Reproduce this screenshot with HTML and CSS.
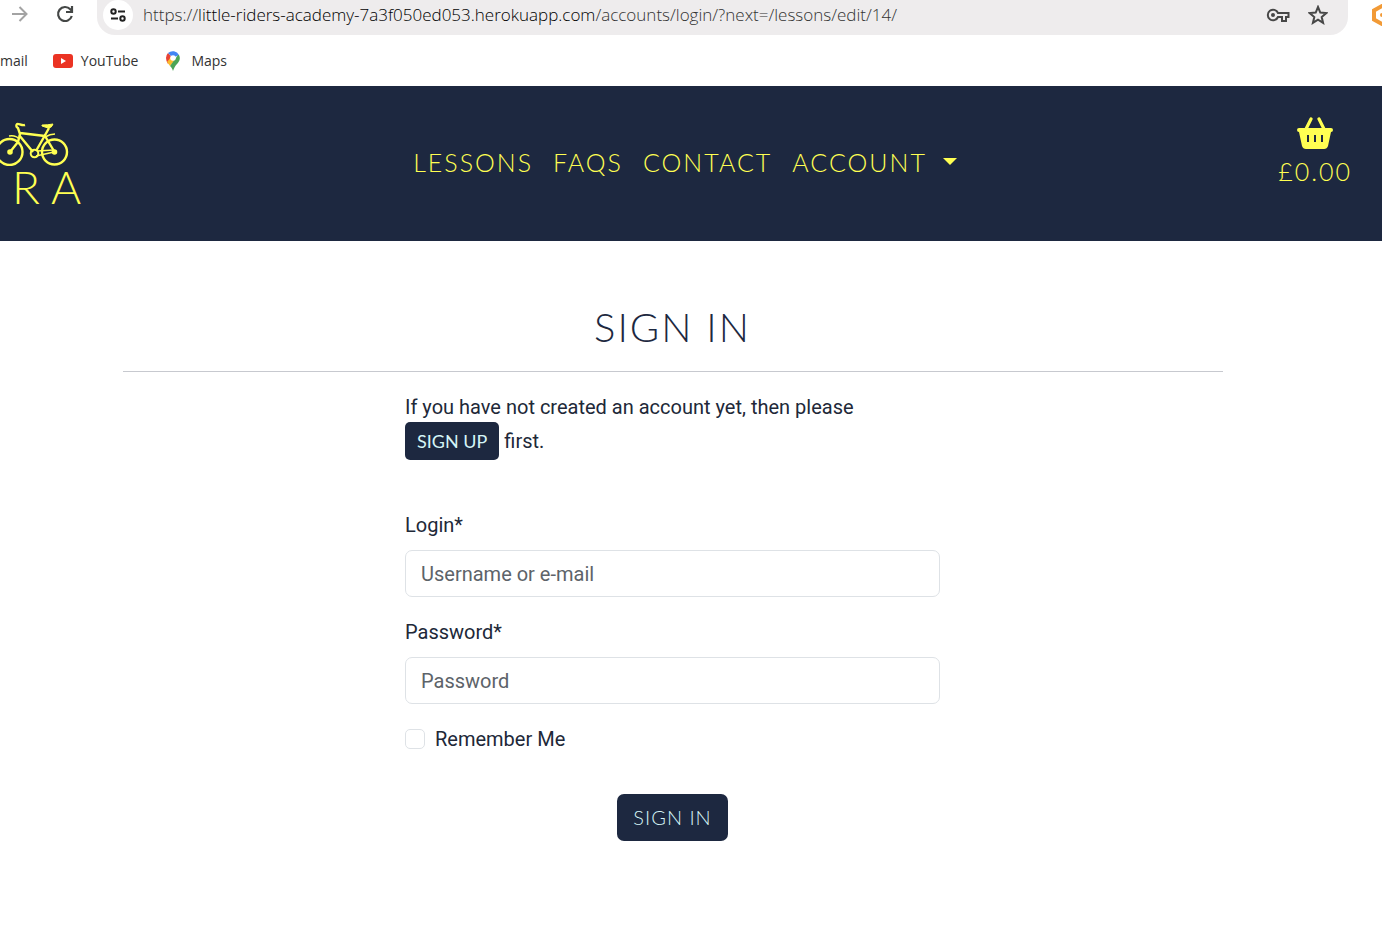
FILE: index.html
```html
<!DOCTYPE html>
<html lang="en">
<head>
<meta charset="utf-8">
<title>Sign In</title>
<link rel="stylesheet" href="styles.css">
</head>
<body>
<div class="browser">
  <div class="toolbar">
    <button class="tool" aria-label="Forward"><svg width="16" height="16" viewBox="0 0 16 16" fill="none" stroke="#a3a3a3" stroke-width="2"><path d="M0 8h14M7.500 1l7 7-7 7"/></svg></button>
    <button class="tool" aria-label="Reload"><svg width="18" height="18" viewBox="0 0 18 18" fill="none" stroke="#444746" stroke-width="2.200"><path d="M15.800 11A7 7 0 1 1 14.300 4.300L16 6"/><path d="M16 1v6h-6"/></svg></button>
    <div class="address">
      <span class="site"><svg width="16" height="14" viewBox="0 0 16 14" fill="none" stroke="#222" stroke-width="2"><circle cx="3.500" cy="3.500" r="2.200"/><path d="M8 3.500h7M1 10.500h7"/><circle cx="12.500" cy="10.500" r="2.200"/></svg></span>
      <span class="url">https://<b>little-riders-academy-7a3f050ed053.herokuapp.com</b>/accounts/login/?next=/lessons/edit/14/</span>
      <svg width="24" height="16" viewBox="0 0 24 16" fill="none" stroke="#474747" stroke-width="2"><path d="M12 6h10.500v4H20v4h-4v-4h-4A5.300 5.300 0 1 1 12 6z"/><circle cx="7" cy="8" r="2" fill="#474747" stroke="none"/></svg>
      <svg class="star" width="20" height="20" viewBox="0 0 20 20" fill="none" stroke="#474747" stroke-width="2"><path d="M10 2l2.300 5.600 6 .5-4.600 3.900 1.400 5.900L10 14.700l-5.100 3.200L6.300 12 1.700 8.100l6-.5z"/></svg>
    </div>
    <svg class="extension" width="22" height="22" viewBox="0 0 22 22" fill="none" stroke="#f29a36" stroke-width="4"><path d="M11 2l8 4.500v9L11 20l-8-4.500v-9z"/><circle cx="11" cy="11" r="2" fill="#f29a36" stroke="none"/></svg>
  </div>
  <div class="bookmarks">
    <a href="#">mail</a>
    <a href="#"><svg width="20" height="14" viewBox="0 0 20 14"><rect width="20" height="14" rx="3" fill="#eb3323"/><path d="M8 4l5 3-5 3z" fill="#fff"/></svg>YouTube</a>
    <a href="#"><svg width="20" height="20" viewBox="-3 0 20 20"><path d="M0 7a7 7 0 0 1 2-5l5 5-5 6Q0 10 0 7z" fill="#e94335"/><path d="M2 2a7 7 0 0 1 11 2L7 7z" fill="#4285f4"/><path d="M1 11l4-5 4 3-5 6z" fill="#fabb2d"/><path d="M13 4c2 4 0 7-2 9s-3 4-4 7c-1-3-2-4-3-5L12 4z" fill="#4ba456"/><circle cx="7" cy="7" r="2.800" fill="#fff"/></svg>Maps</a>
  </div>
</div>
<header class="header">
  <a class="logo" href="#" aria-label="Little Riders Academy">
    <svg width="69" height="46" viewBox="0 0 69 46" fill="none" stroke="#ffff52" stroke-width="2"><circle cx="9.500" cy="32" r="13" stroke-width="2.400"/><circle cx="54.500" cy="32" r="12.500" stroke-width="2.400"/><path d="M25 5c-3 1-7-2-8-1s-1 3 1 4l2 6-2 8-8 10M20 13l25 3M19 15l14 17M49 8l-5 9-8 14M45 16l9 15" stroke-width="2.400"/><path d="M37 31l17-1M36 36l18-4" stroke-width="1.600"/><path d="M42 5q6 0 11-1-1 4-5 4-3-1-6-2z" fill="#ffff52" stroke-width="1"/><path d="M9 16q7-1 10 3M45 17q5-3 10-3" stroke-width="1.600"/><circle cx="34.500" cy="33.500" r="3.800"/><circle cx="10" cy="32" r="1.800" fill="#ffff52"/><circle cx="54.500" cy="32" r="1.800" fill="#ffff52"/></svg>
    <span>R A</span>
  </a>
  <nav class="nav">
    <a href="#">LESSONS</a><a href="#">FAQS</a><a href="#">CONTACT</a>
    <button>ACCOUNT<i class="caret"></i></button>
  </nav>
  <a class="basket" href="#">
    <svg width="36" height="32" viewBox="0 0 36 32"><path d="M14 2L9 12M22 2L27 12" stroke="#ffff52" stroke-width="3.200" stroke-linecap="round"/><path fill="#ffff52" fill-rule="evenodd" d="M2 11h32q2 0 2 2t-2 2l-3 14q-1 3-4 3H9q-3 0-4-3L2 15q-2 0-2-2t2-2zM10 18v7h2v-7zm7 0v7h2v-7zm7 0v7h2v-7z"/></svg>
    <span>£0.00</span>
  </a>
</header>
<main class="main">
  <h1>SIGN IN</h1>
  <form class="form">
    <p>If you have not created an account yet, then please <a class="signup" href="#">SIGN UP</a> first.</p>
    <label for="login">Login*</label>
    <input class="field" id="login" type="text" placeholder="Username or e-mail">
    <label for="password">Password*</label>
    <input class="field" id="password" type="password" placeholder="Password">
    <div class="remember"><input id="remember" type="checkbox"><label for="remember">Remember Me</label></div>
    <button class="submit" type="submit">SIGN IN</button>
  </form>
</main>
</body>
</html>
```
FILE: styles.css
```css
* { box-sizing: border-box; }
body {
  margin: 0;
  background: #fff;
  color: #212838;
  font: 20px/32px Roboto, sans-serif;
  overflow-x: hidden;
}
a { color: inherit; text-decoration: none; }
button { border: 0; background: none; color: inherit; padding: 0; font: inherit; }
svg { display: block; flex: none; }

.browser { font-family: "Open Sans", sans-serif; color: #333; }
.toolbar { display: flex; align-items: flex-start; height: 35px; overflow: hidden; padding-left: 12px; }
.tool { width: 44px; height: 28px; flex: none; }
.address {
  flex: 1;
  display: flex;
  align-items: center;
  height: 35px;
  padding: 0 20px 6px 6px;
  margin-right: 23px;
  background: #eeeced;
  border-radius: 0 0 18px 18px;
  margin-left: -3px;
}
.site {
  display: flex;
  flex: none;
  align-items: center;
  justify-content: center;
  width: 30px;
  height: 30px;
  margin-right: 10px;
  border-radius: 50%;
  background: #fff;
}
.url { flex: 1; font-size: 17px; font-weight: 300; line-height: 28px; white-space: nowrap; }
.url b { font-weight: inherit; color: #000; }
.star { margin-left: 18px; }
.extension { margin: 4px -11px 0 0; }
.bookmarks { display: flex; gap: 25px; height: 51px; font-size: 14px; line-height: 51px; }
.bookmarks a { display: flex; align-items: center; gap: 8px; }

.header {
  display: grid;
  grid-template-columns: 1fr auto 1fr;
  align-items: center;
  height: 155px;
  padding-right: 12px;
  background: #1d2840;
  color: #ffff52;
  font-family: Lato, sans-serif;
  font-weight: 300;
}
.logo span { display: block; padding-left: 12px; font-size: 46px; line-height: 42px; }
.nav { display: flex; gap: 20px; padding-bottom: 4px; font-size: 25px; letter-spacing: 2px; }
.nav button { display: flex; align-items: center; gap: 16px; letter-spacing: inherit; }
.caret { border: 7px solid transparent; border-top-color: #ffff52; border-bottom: 0; }
.basket {
  justify-self: end;
  display: grid;
  justify-items: center;
  gap: 6px;
  padding: 0 18px 24px 0;
  font-size: 25px;
  letter-spacing: 2px;
}

.main { padding: 60px 37px 0 0; }
h1 {
  max-width: 1100px;
  margin: 0 auto 20px;
  padding-bottom: 18px;
  border-bottom: 1px solid #c7c9cf;
  color: #1d2840;
  font: 300 40px/52px Lato, sans-serif;
  letter-spacing: 2px;
  text-align: center;
}
.form { display: flex; flex-direction: column; max-width: 535px; margin: 0 auto; }
.form p { margin: 0 0 49px; line-height: 30px; }
.signup {
  display: inline-block;
  padding: 0 12px;
  border-radius: 5px;
  background: #1d2840;
  color: #d5f5f7;
  font: 400 18px/38px Lato, sans-serif;
}
.field {
  height: 47px;
  margin: 9px 0 19px;
  padding: 0 15px;
  border: 1px solid #dee2e6;
  border-radius: 7px;
  font: inherit;
}
.field::placeholder { color: #5d6369; opacity: 1; }
.remember { display: flex; align-items: center; gap: 10px; }
.remember input {
  appearance: none;
  width: 20px;
  height: 20px;
  margin: 0;
  border: 1px solid #dee2e6;
  border-radius: 5px;
}
.submit {
  align-self: center;
  height: 47px;
  margin-top: 39px;
  padding: 0 16px;
  border-radius: 7px;
  background: #1d2840;
  color: #d5f5f7;
  font: 300 20px/47px Lato, sans-serif;
  letter-spacing: 1px;
}
```
